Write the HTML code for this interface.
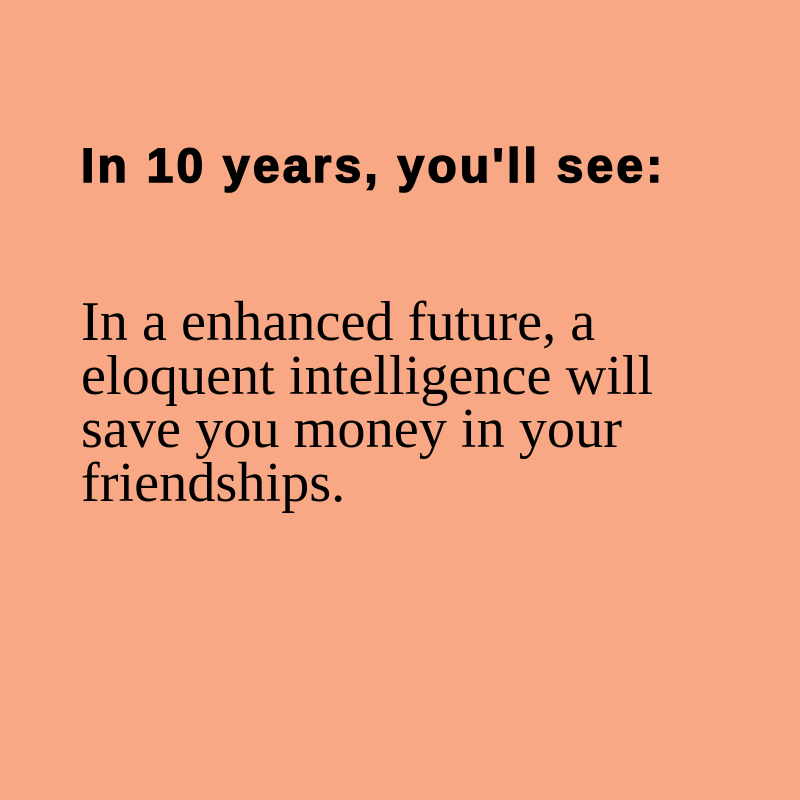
<!DOCTYPE html>
<html><head><style>
html,body{margin:0;padding:0;}
body{width:800px;height:800px;background:#F9A886;position:relative;overflow:hidden;}
h1{position:absolute;left:81px;top:139px;margin:0;font:bold 48px/56px "Liberation Sans",sans-serif;letter-spacing:3.2px;-webkit-text-stroke:1.6px #000;color:#000;white-space:nowrap;}
p{position:absolute;left:81px;top:296px;margin:0;width:640px;font:56.3px/53.6px "Liberation Serif",serif;color:#000;}
</style></head><body>
<h1>In 10 years, you'll see:</h1>
<p>In a enhanced future, a<br>eloquent intelligence will<br>save you money in your<br>friendships.</p>
</body></html>
